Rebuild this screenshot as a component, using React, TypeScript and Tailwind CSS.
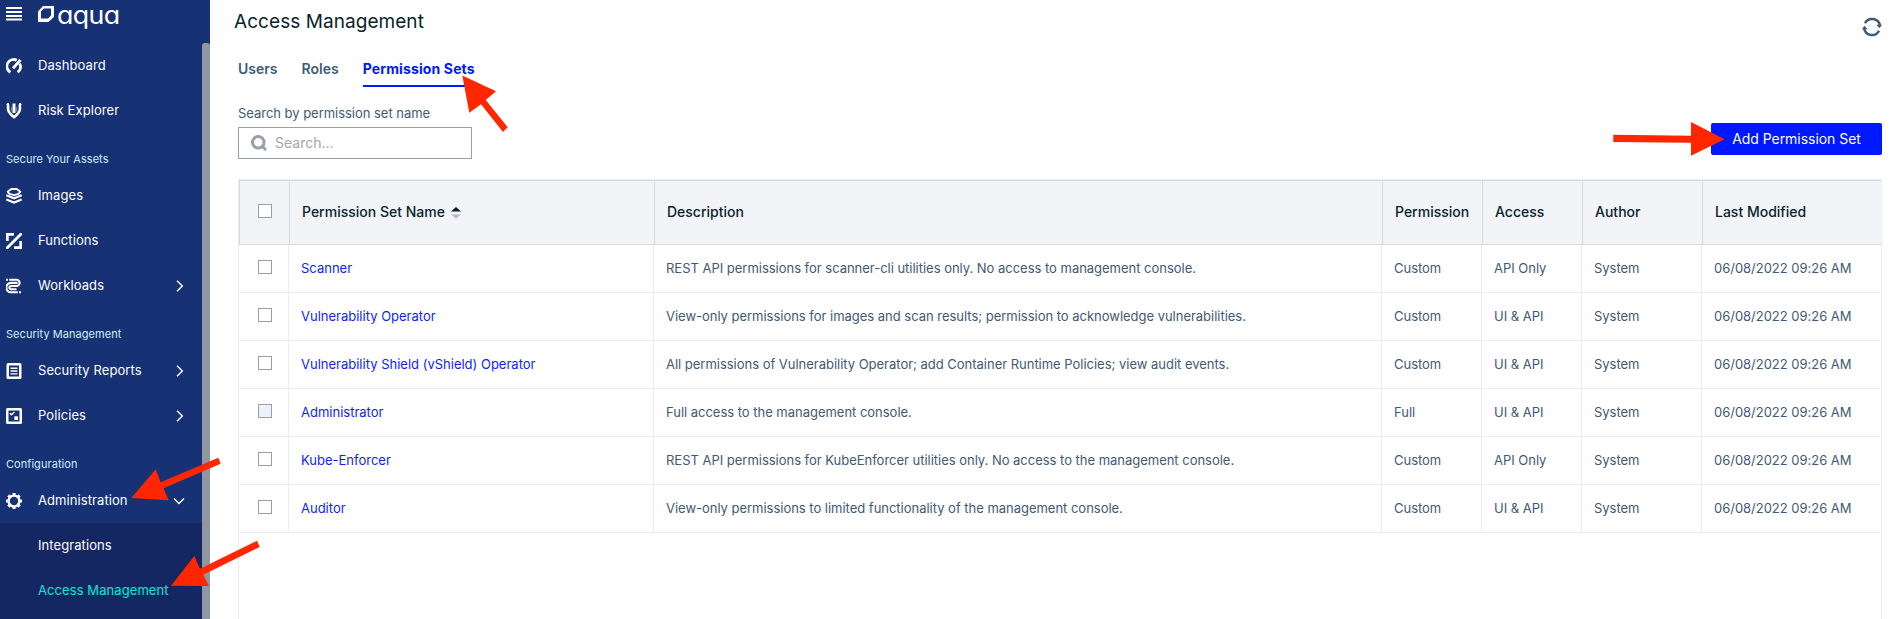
import type { ReactNode } from "react";

const stroke = { fill: "none", stroke: "currentColor" } as const;

function Icon({ children }: { children: ReactNode }) {
  return (
    <svg viewBox="0 0 16 16" className="h-4 w-4 shrink-0 text-white">
      {children}
    </svg>
  );
}

const icons = {
  dashboard: (
    <Icon>
      <path {...stroke} strokeWidth="2.8" d="M4.400 14.200A6.400 6.400 0 0 1 10.800 2.300M13.700 5.600a6.400 6.400 0 0 1-2.100 8.600" />
      <path {...stroke} strokeWidth="2.8" d="M7 10.300 14.500 2" />
    </Icon>
  ),
  risk: (
    <Icon>
      <path {...stroke} strokeWidth="2.600" d="M1.200 .3c1.600 1.500 .8 3.600 .8 5.400 0 2.800 2 5.300 6 8.500 4-3.200 6-5.700 6-8.500 0-1.800-.8-3.900 .8-5.400" />
      <path {...stroke} strokeWidth="3" d="M8 .5v9.500" />
      <path {...stroke} strokeWidth="1.200" d="M5.400 4v4.500M10.600 4v4.500" opacity=".4" />
    </Icon>
  ),
  images: (
    <Icon>
      <path {...stroke} strokeWidth="1.800" strokeLinejoin="round" d="M5.300 1h5.400l3.700 2.700L12.500 5.900 8 7.200 3.500 5.900 1.600 3.700z" />
      <path {...stroke} strokeWidth="2.200" d="M.3 7.300 8 10.300l7.700-3M.3 11.500 8 14.500l7.700-3" />
    </Icon>
  ),
  functions: (
    <Icon>
      <path fill="currentColor" d="M0 0h8v2.700H2.700V8H0zM16 16H8v-2.700h5.300V8H16zM14 0H16v2L2 16H0v-2z" />
    </Icon>
  ),
  workloads: (
    <Icon>
      <path {...stroke} strokeWidth="2.100" d="M3.200 1.800h7.300a3 3 0 0 1 0 6.200H5a1.600 1.600 0 0 0 0 3.200h5.500M11.500 4.900H5A3.300 3.300 0 0 0 5 14.300h6.800" />
      <path fill="currentColor" d="M0 .8h2v2H0zM13 13.300h2v2h-2z" />
    </Icon>
  ),
  reports: (
    <Icon>
      <rect {...stroke} strokeWidth="2.500" x="1.750" y="1.250" width="12.500" height="13.500" rx=".3" />
      <path {...stroke} strokeWidth="1.400" d="M4.500 5.200h7M4.500 8h7M4.500 10.900h7" />
    </Icon>
  ),
  policies: (
    <Icon>
      <rect {...stroke} strokeWidth="2.500" x="1.250" y="1.250" width="13.500" height="13.500" rx=".3" />
      <path {...stroke} strokeWidth="1.400" d="M3.800 5.200 5.400 6.800 8.400 3.900" />
      <path fill="currentColor" d="M8.300 8.300h3.700V12H8.300z" />
    </Icon>
  ),
  gear: (
    <Icon>
      <circle {...stroke} strokeWidth="2.400" cx="8" cy="8" r="5.400" />
      <path
        {...stroke}
        strokeWidth="3"
        d="M8 0v2.400M8 13.600V16M0 8h2.400M13.600 8H16M2.350 2.350l1.600 1.600M12.050 12.050l1.600 1.600M2.350 13.650l1.600-1.600M12.050 3.950l1.600-1.600"
      />
    </Icon>
  ),
};

function NavItem({ icon, label, chevron }: { icon: ReactNode; label: string; chevron?: "right" | "down" }) {
  return (
    <a className="flex h-[45px] items-center pr-4 pl-1.5 text-[13px] tracking-[0.080px] text-white">
      {icon}
      <span className="ml-4 flex-1">{label}</span>
      {chevron === "right" && (
        <svg viewBox="0 0 12 12" className="mr-px h-3 w-3">
          <path {...stroke} strokeWidth="1.400" d="M4 .7 9.300 6 4 11.300" />
        </svg>
      )}
      {chevron === "down" && (
        <svg viewBox="0 0 12 12" className="mr-px h-3 w-3">
          <path {...stroke} strokeWidth="1.400" d="M1 3.500 6 8.500 11 3.500" />
        </svg>
      )}
    </a>
  );
}

function Section({ label }: { label: string }) {
  return <div className="flex h-10 items-center pt-3 pl-1.5 text-[11px] tracking-[0.050px] text-[#cdeff5]">{label}</div>;
}

function Sidebar() {
  return (
    <aside className="flex w-[210px] shrink-0 flex-col bg-[#173175]">
      <div className="flex h-[43px] shrink-0 items-start pl-1.5">
        <svg viewBox="0 0 16 14" className="mt-[7px] h-3.5 w-4">
          <path fill="#fff" d="M0 0h16v2H0zM0 4h16v2H0zM0 8h16v2H0zM0 11.500h16v2H0z" />
        </svg>
        <svg viewBox="0 0 16 16" className="mt-[5.500px] ml-4 h-4 w-4">
          <path fill="#fff" fillRule="evenodd" d="M5 0H16V11L10.500 16H0V5.500zM5.700 2.600 3 5.500V12.500H10L13 9.500V2.600z" />
        </svg>
        <span className="ml-[3px] origin-left scale-x-107 text-[25px] leading-[30px] font-normal tracking-[-0.600px] text-white [font-feature-settings:'cv11']">
          aqua
        </span>
      </div>
      <div className="flex flex-1">
        <nav className="w-[202px]">
          <NavItem icon={icons.dashboard} label="Dashboard" />
          <NavItem icon={icons.risk} label="Risk Explorer" />
          <Section label="Secure Your Assets" />
          <NavItem icon={icons.images} label="Images" />
          <NavItem icon={icons.functions} label="Functions" />
          <NavItem icon={icons.workloads} label="Workloads" chevron="right" />
          <Section label="Security Management" />
          <NavItem icon={icons.reports} label="Security Reports" chevron="right" />
          <NavItem icon={icons.policies} label="Policies" chevron="right" />
          <Section label="Configuration" />
          <NavItem icon={icons.gear} label="Administration" chevron="down" />
          <div className="h-24 bg-[#152762] pl-[38px] text-[13px] leading-[45px] tracking-[0.080px] text-white">
            <div>Integrations</div>
            <div className="text-[#00ecd3]">Access Management</div>
          </div>
        </nav>
        <div className="w-2 rounded-t-[3px] bg-[#9097a1]" />
      </div>
    </aside>
  );
}

function Checkbox({ muted = false }: { muted?: boolean }) {
  return <span className={`h-3.5 w-3.5 border border-[#97a1ae] ${muted ? "bg-[#edf1fb]" : "bg-white"}`} />;
}

const rows = [
  ["Scanner", "REST API permissions for scanner-cli utilities only. No access to management console.", "Custom", "API Only"],
  ["Vulnerability Operator", "View-only permissions for images and scan results; permission to acknowledge vulnerabilities.", "Custom", "UI & API"],
  ["Vulnerability Shield (vShield) Operator", "All permissions of Vulnerability Operator; add Container Runtime Policies; view audit events.", "Custom", "UI & API"],
  ["Administrator", "Full access to the management console.", "Full", "UI & API"],
  ["Kube-Enforcer", "REST API permissions for KubeEnforcer utilities only. No access to the management console.", "Custom", "API Only"],
  ["Auditor", "View-only permissions to limited functionality of the management console.", "Custom", "UI & API"],
];

function Table() {
  return (
    <div className="mt-[20px] flex-1 border-x border-t border-[#ececf4]">
      <div className="grid h-[65px] grid-cols-[50px_365px_728px_100px_100px_120px_179px] border-y border-[#d8d9dc] bg-[#f3f4f8] text-[14px] font-medium text-[#07242d] *:flex *:items-center *:border-l *:border-[#d8d9dc] *:pb-0.5 *:pl-3">
        <div className="pb-[3px]! pl-[18px]!">
          <Checkbox />
        </div>
        <div>
          Permission Set Name
          <svg viewBox="0 0 10 12" className="mt-0.5 ml-1.5 h-3 w-2.5">
            <path fill="#07242d" d="M0 4.500 5 0l5 4.500z" />
            <path fill="#bbbfca" d="M0 7.200 5 11.700l5-4.500z" />
          </svg>
        </div>
        <div>Description</div>
        <div>Permission</div>
        <div>Access</div>
        <div>Author</div>
        <div>Last Modified</div>
      </div>
      {rows.map(([name, description, permission, access]) => (
        <div
          key={name}
          className="grid h-12 grid-cols-[49px_365px_728px_100px_100px_120px_180px] border-b border-[#ececf4] text-[13px] tracking-[-0.020px] text-[#405a78] *:flex *:items-center *:border-l *:border-[#ececf4] *:pl-3"
        >
          <div className="border-l-0! pb-[3px] pl-[19px]!">
            <Checkbox muted={name === "Administrator"} />
          </div>
          <div className="tracking-normal text-[#0b1fff]">{name}</div>
          <div>{description}</div>
          <div>{permission}</div>
          <div>{access}</div>
          <div>System</div>
          <div>06/08/2022 09:26 AM</div>
        </div>
      ))}
    </div>
  );
}

function Pointers() {
  return (
    <svg viewBox="0 0 1900 619" className="pointer-events-none absolute inset-0 h-[619px] w-[1900px]" fill="#ff2600">
      <path d="M462.300 75.500 496 91.300 485.700 100 507.700 127.300 503 132 481 104.300 469.300 112.700z" />
      <path d="M1724.700 139.300 1691 155.700V142.700L1613.300 142V134.700L1691 135.700V122z" />
      <path d="M131.300 498 155.700 469.300 160.700 482.300 218.300 457.700 220.700 463.700 163.500 488.300 168.700 500.300z" />
      <path d="M171 585.700 194.300 556 200 568.700 257 540.700 259.700 547 203.300 574.700 209 586z" />
    </svg>
  );
}

export default function App() {
  return (
    <div className="relative flex h-[619px] w-[1900px] overflow-hidden bg-white font-['Inter','Liberation_Sans',sans-serif]">
      <Sidebar />
      <main className="flex flex-1 flex-col pr-[18px] pl-7">
        <header className="flex h-[43px] justify-between">
          <h1 className="-ml-1 text-[19px] leading-[43px] tracking-[0.060px] text-[#07242d]">Access Management</h1>
          <svg viewBox="0 0 20 20" className="mt-[17px] h-5 w-5 text-[#405a78]">
            <path {...stroke} strokeWidth="2.500" d="M3 6.300a7.900 7.900 0 0 1 14.900 2.500M17 13.700A7.900 7.900 0 0 1 2.100 11.200" />
            <path fill="currentColor" d="M14.300 7.800H20L17.600 11.300zM0 12.200 2.400 8.700 5.700 12.200z" />
          </svg>
        </header>
        <div className="flex h-11 gap-6 text-[14px] font-semibold text-[#405a78]">
          <span className="leading-[52px]">Users</span>
          <span className="leading-[52px]">Roles</span>
          <span className="border-b-2 border-[#0018ff] leading-[52px] font-bold tracking-[0.130px] text-[#0018ff]">
            Permission Sets
          </span>
        </div>
        <div className="flex h-[72px] items-start justify-between">
          <label className="text-[13px] text-[#405a78]">
            <span className="block h-10 pt-4 leading-5 tracking-[-0.030px]">Search by permission set name</span>
            <span className="flex h-8 w-[234px] items-center border border-[#97a1ae] pl-3 text-[14px] text-[#a0a6b3]">
              <svg viewBox="0 0 16 16" className="mr-2 h-4 w-4 text-[#97a1ae]">
                <circle {...stroke} strokeWidth="3" cx="7.300" cy="7.300" r="5.800" />
                <path {...stroke} strokeWidth="3" d="m11 11 4 4" />
              </svg>
              <span className="pb-0.5">Search...</span>
            </span>
          </label>
          <button className="mt-9 h-8 w-[171px] rounded-xs bg-[#0018ff] pb-0.5 text-[14px] tracking-[-0.040px] text-white">
            Add Permission Set
          </button>
        </div>
        <Table />
      </main>
      <Pointers />
    </div>
  );
}
